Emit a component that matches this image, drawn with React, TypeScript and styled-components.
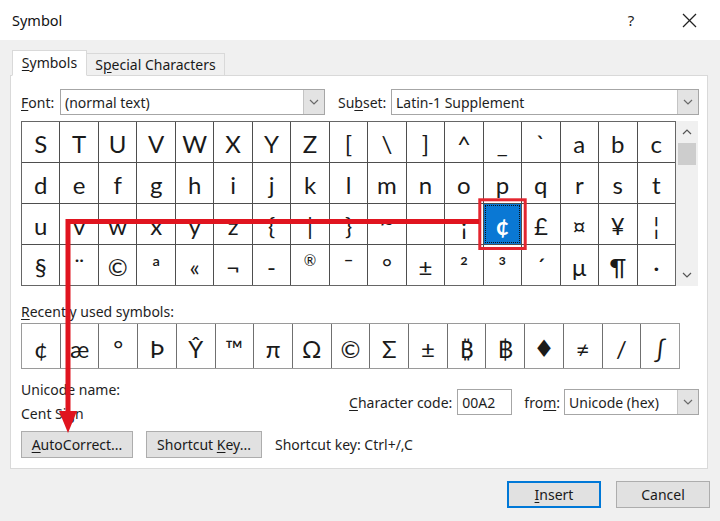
import React from "react";
import styled, { createGlobalStyle } from "styled-components";

const UI_FONT = `"Noto Sans", "Open Sans", "DejaVu Sans", sans-serif`;
const SYM_FONT = `Lato, "Noto Sans", "DejaVu Sans", sans-serif`;

const Global = createGlobalStyle`
  html, body { margin: 0; padding: 0; }
  body { width: 720px; height: 521px; overflow: hidden; background: #f0f0f0; }
  * { box-sizing: border-box; }
`;

const Dialog = styled.div`
  position: relative;
  width: 720px;
  height: 521px;
  background: #f0f0f0;
  font-family: ${UI_FONT};
  font-size: 14px;
  color: #1e1e1e;
  display: flex;
  flex-direction: column;
  overflow: hidden;
`;

const TitleBar = styled.div`
  height: 40px;
  flex: none;
  background: #ffffff;
  display: flex;
  align-items: center;
  padding-left: 12px;
  padding-right: 2px;
`;

const TitleText = styled.div`
  flex: 1;
  font-size: 14.5px;
  color: #111;
`;

const TitleButton = styled.div`
  width: 58px;
  height: 40px;
  display: flex;
  align-items: center;
  justify-content: center;
  font-size: 15px;
  color: #222;
`;

const Main = styled.div`
  padding: 10px 12px 0 10px;
  display: flex;
  flex-direction: column;
`;

const TabStrip = styled.div`
  display: flex;
  align-items: flex-end;
  height: 26px;
  padding-left: 2px;
  position: relative;
  z-index: 1;
  margin-bottom: -1px;
`;

const Tab = styled.div<{ $active?: boolean }>`
  height: ${(p) => (p.$active ? 26 : 23)}px;
  width: ${(p) => (p.$active ? 75 : 138)}px;
  display: flex;
  align-items: center;
  justify-content: center;
  background: ${(p) => (p.$active ? "#ffffff" : "#f0f0f0")};
  border: 1px solid #d9d9d9;
  border-bottom: ${(p) => (p.$active ? "1px solid #ffffff" : "1px solid #d9d9d9")};
  border-left: ${(p) => (p.$active ? "1px solid #d9d9d9" : "none")};
  padding-bottom: ${(p) => (p.$active ? 2 : 0)}px;
  color: #1a1a1a;
`;

const Panel = styled.div`
  height: 394px;
  background: #ffffff;
  border: 1px solid #d9d9d9;
  padding: 13px 8px 0 10px;
  display: flex;
  flex-direction: column;
`;

const Key = styled.span`
  text-decoration: underline;
  text-underline-offset: 2px;
`;

const FieldRow = styled.div`
  display: flex;
  align-items: center;
  height: 26px;
`;

const FieldLabel = styled.div<{ $width: number; $gap?: number }>`
  width: ${(p) => p.$width}px;
  margin-left: ${(p) => p.$gap ?? 0}px;
  flex: none;
  white-space: nowrap;
`;

const Combo = styled.div<{ $width?: number; $gap?: number }>`
  ${(p) => (p.$width ? `width: ${p.$width}px; flex: none;` : "flex: 1;")}
  margin-left: ${(p) => p.$gap ?? 0}px;
  height: 26px;
  border: 1px solid #a6a6a6;
  background: #ffffff;
  display: flex;
  align-items: stretch;
`;

const ComboText = styled.div`
  flex: 1;
  display: flex;
  align-items: center;
  padding-left: 4px;
  white-space: nowrap;
`;

const ComboButton = styled.div`
  width: 21px;
  flex: none;
  background: #e3e3e3;
  border-left: 1px solid #c4c4c4;
  display: flex;
  align-items: center;
  justify-content: center;
`;

const GridArea = styled.div`
  display: flex;
  margin-top: 6px;
  height: 165px;
`;

const SymbolGrid = styled.div`
  width: 655px;
  display: grid;
  grid-template-columns: repeat(17, 1fr);
  grid-template-rows: repeat(4, 1fr);
  gap: 1px;
  background: #4e4e4e;
  border: 1px solid #666666;
`;

const SymbolCell = styled.div<{ $selected?: boolean; $lift?: number; $size?: number }>`
  background: ${(p) => (p.$selected ? "#0a78d4" : "#ffffff")};
  color: ${(p) => (p.$selected ? "#ffffff" : "#1a1a1a")};
  font-family: ${SYM_FONT};
  font-size: ${(p) => p.$size ?? 24}px;
  display: flex;
  align-items: center;
  justify-content: center;
  padding-top: 3px;
  outline: ${(p) => (p.$selected ? "1px dotted #111" : "none")};
  outline-offset: -2px;
  font-weight: ${(p) => (p.$selected ? 700 : 400)};
  & > span {
    position: relative;
    top: ${(p) => -(p.$lift ?? 0)}px;
  }
`;

const ScrollBar = styled.div`
  width: 22px;
  flex: none;
  background: #f0f0f0;
  display: flex;
  flex-direction: column;
  align-items: center;
`;

const ScrollArrow = styled.div`
  height: 22px;
  width: 100%;
  display: flex;
  align-items: center;
  justify-content: center;
`;

const ScrollThumb = styled.div`
  width: 18px;
  height: 22px;
  background: #cdcdcd;
`;

const ScrollTrack = styled.div`
  flex: 1;
`;

const SectionLabel = styled.div`
  margin-top: 16px;
  margin-bottom: 2px;
  height: 19px;
  line-height: 19px;
`;

const RecentRow = styled.div`
  width: 659px;
  height: 46px;
  display: grid;
  grid-template-columns: repeat(17, 1fr);
  gap: 1px;
  background: #707070;
  border: 1px solid #9a9a9a;
`;

const RecentCell = styled.div`
  background: #ffffff;
  font-family: ${SYM_FONT};
  font-size: 24px;
  color: #1a1a1a;
  display: flex;
  align-items: center;
  justify-content: center;
  padding-top: 4px;
`;

const InfoRow = styled.div`
  margin-top: 9px;
  height: 48px;
  display: flex;
  align-items: center;
`;

const InfoLines = styled.div`
  flex: 1;
  display: flex;
  flex-direction: column;
`;

const InfoLine = styled.div`
  height: 24px;
  line-height: 24px;
  white-space: nowrap;
`;

const CodeGroup = styled.div`
  display: flex;
  align-items: center;
  height: 26px;
`;

const CodeInput = styled.div`
  width: 55px;
  height: 26px;
  border: 1px solid #a6a6a6;
  background: #fff;
  padding-left: 4px;
  display: flex;
  align-items: center;
  margin-left: 5px;
  margin-right: 12px;
`;

const ButtonRow = styled.div`
  margin-top: 5px;
  display: flex;
  align-items: center;
  gap: 13px;
`;

const PushButton = styled.div<{ $width: number; $default?: boolean }>`
  width: ${(p) => p.$width}px;
  height: 27px;
  background: #e1e1e1;
  border: 1px solid ${(p) => (p.$default ? "#0078d7" : "#adadad")};
  box-shadow: ${(p) => (p.$default ? "inset 0 0 0 1px #0078d7" : "none")};
  display: flex;
  align-items: center;
  justify-content: center;
  white-space: nowrap;
  color: #1a1a1a;
`;

const HintText = styled.div`
  white-space: nowrap;
`;

const Footer = styled.div`
  display: flex;
  justify-content: flex-end;
  gap: 15px;
  padding: 12px 10px 0 0;
`;

const Overlay = styled.svg`
  position: absolute;
  left: 0;
  top: 0;
  pointer-events: none;
`;

const Chevron = ({ dir = "down", color = "#6a6a6a" }: { dir?: "up" | "down"; color?: string }) => (
  <svg width="10" height="6" viewBox="0 0 10 6">
    <polyline
      points={dir === "down" ? "1,1 5,5 9,1" : "1,5 5,1 9,5"}
      fill="none"
      stroke={color}
      strokeWidth="1.2"
    />
  </svg>
);

const CloseIcon = () => (
  <svg width="15" height="15" viewBox="0 0 15 15">
    <line x1="1" y1="1" x2="14" y2="14" stroke="#222" strokeWidth="1.2" />
    <line x1="14" y1="1" x2="1" y2="14" stroke="#222" strokeWidth="1.2" />
  </svg>
);

const ROWS: string[][] = [
  ["S", "T", "U", "V", "W", "X", "Y", "Z", "[", "\\", "]", "^", "_", "`", "a", "b", "c"],
  ["d", "e", "f", "g", "h", "i", "j", "k", "l", "m", "n", "o", "p", "q", "r", "s", "t"],
  ["u", "v", "w", "x", "y", "z", "{", "|", "}", "~", "\u00a0", "¡", "¢", "£", "¤", "¥", "¦"],
  ["§", "¨", "©", "ª", "«", "¬", "-", "®", "¯", "°", "±", "²", "³", "´", "µ", "¶", "·"],
];

/* per-glyph tweaks so the fallback font sits like the original's glyphs */
const GLYPH_TWEAKS: Record<string, { lift?: number; size?: number }> = {
  "~": { lift: 5 },
  "®": { lift: 7, size: 15 },
};

const RECENT = ["¢", "æ", "°", "Þ", "Ŷ", "™", "π", "Ω", "©", "Σ", "±", "₿", "฿", "♦", "≠", "/", "∫"];

export default function App() {
  return (
    <Dialog>
      <Global />
      <TitleBar>
        <TitleText>Symbol</TitleText>
        <TitleButton>?</TitleButton>
        <TitleButton>
          <CloseIcon />
        </TitleButton>
      </TitleBar>
      <Main>
        <TabStrip>
          <Tab $active>
            <span>
              <Key>S</Key>ymbols
            </span>
          </Tab>
          <Tab>
            <span>
              S<Key>p</Key>ecial Characters
            </span>
          </Tab>
        </TabStrip>
        <Panel>
          <FieldRow>
            <FieldLabel $width={39}>
              <Key>F</Key>ont:
            </FieldLabel>
            <Combo $width={265}>
              <ComboText>(normal text)</ComboText>
              <ComboButton>
                <Chevron />
              </ComboButton>
            </Combo>
            <FieldLabel $width={53} $gap={13}>
              Su<Key>b</Key>set:
            </FieldLabel>
            <Combo>
              <ComboText>Latin-1 Supplement</ComboText>
              <ComboButton>
                <Chevron />
              </ComboButton>
            </Combo>
          </FieldRow>
          <GridArea>
            <SymbolGrid>
              {ROWS.map((row, r) =>
                row.map((ch, c) => {
                  const t = GLYPH_TWEAKS[ch] ?? {};
                  return (
                    <SymbolCell
                      key={`${r}-${c}`}
                      $selected={r === 2 && c === 12}
                      $lift={t.lift}
                      $size={t.size}
                    >
                      <span>{ch}</span>
                    </SymbolCell>
                  );
                })
              )}
            </SymbolGrid>
            <ScrollBar>
              <ScrollArrow>
                <Chevron dir="up" color="#555" />
              </ScrollArrow>
              <ScrollThumb />
              <ScrollTrack />
              <ScrollArrow>
                <Chevron dir="down" color="#555" />
              </ScrollArrow>
            </ScrollBar>
          </GridArea>
          <SectionLabel>
            <Key>R</Key>ecently used symbols:
          </SectionLabel>
          <RecentRow>
            {RECENT.map((ch, i) => (
              <RecentCell key={i}>{ch}</RecentCell>
            ))}
          </RecentRow>
          <InfoRow>
            <InfoLines>
              <InfoLine>Unicode name:</InfoLine>
              <InfoLine>Cent Sign</InfoLine>
            </InfoLines>
            <CodeGroup>
              <span>
                <Key>C</Key>haracter code:
              </span>
              <CodeInput>00A2</CodeInput>
              <span>
                fro<Key>m</Key>:
              </span>
              <Combo $width={135} $gap={4}>
                <ComboText>Unicode (hex)</ComboText>
                <ComboButton>
                  <Chevron />
                </ComboButton>
              </Combo>
            </CodeGroup>
          </InfoRow>
          <ButtonRow>
            <PushButton $width={112}>
              <span>
                <Key>A</Key>utoCorrect...
              </span>
            </PushButton>
            <PushButton $width={116}>
              <span>
                Shortcut <Key>K</Key>ey...
              </span>
            </PushButton>
            <HintText>Shortcut key: Ctrl+/,C</HintText>
          </ButtonRow>
        </Panel>
      </Main>
      <Footer>
        <PushButton $width={94} $default>
          <span>
            <Key>I</Key>nsert
          </span>
        </PushButton>
        <PushButton $width={94}>Cancel</PushButton>
      </Footer>
      <Overlay width="720" height="521" viewBox="0 0 720 521">
        <rect x="479.8" y="199.8" width="45.4" height="48.7" fill="none" stroke="#e3262f" strokeWidth="3" />
        <polyline
          points="479,221.5 68,221.5 68,414"
          fill="none"
          stroke="#e0141f"
          strokeWidth="5"
          strokeLinejoin="miter"
        />
        <polygon points="59,411 77,411 68,433" fill="#e0141f" />
      </Overlay>
    </Dialog>
  );
}
